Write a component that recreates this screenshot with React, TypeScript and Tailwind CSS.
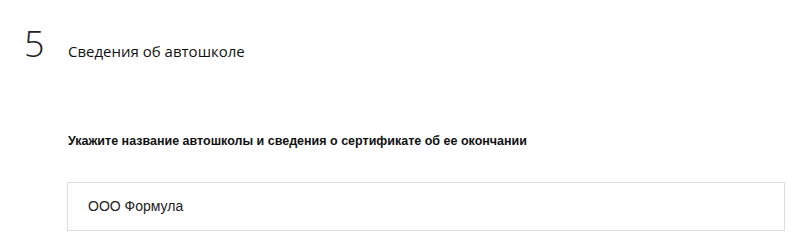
export default function App() {
  return (
    <div className="h-[233px] w-[804px] overflow-hidden bg-white">
      <div className="flex items-end pl-[24px] pt-[24px]">
        <span className="w-[44px] font-['Open_Sans',sans-serif] text-[36px] leading-[40px] font-extralight text-[#222]">
          5
        </span>
        <h1 className="pb-[3px] font-['Open_Sans',sans-serif] text-[15px] leading-[20px] text-[#111]">
          Сведения об автошколе
        </h1>
      </div>
      <div className="pl-[67px] pr-[19px] pt-[70px]">
        <p className="pl-[1px] font-['Liberation_Sans',Arial,sans-serif] text-[12.5px] leading-[15px] font-bold text-[#111]">
          Укажите название автошколы и сведения о сертификате об ее окончании
        </p>
        <div className="mt-[33px] flex h-[49px] items-center border border-[#dcdcdc] pl-[20px]">
          <span className="font-['Liberation_Sans',Arial,sans-serif] text-[14px] text-[#222]">
            ООО Формула
          </span>
        </div>
      </div>
    </div>
  )
}
